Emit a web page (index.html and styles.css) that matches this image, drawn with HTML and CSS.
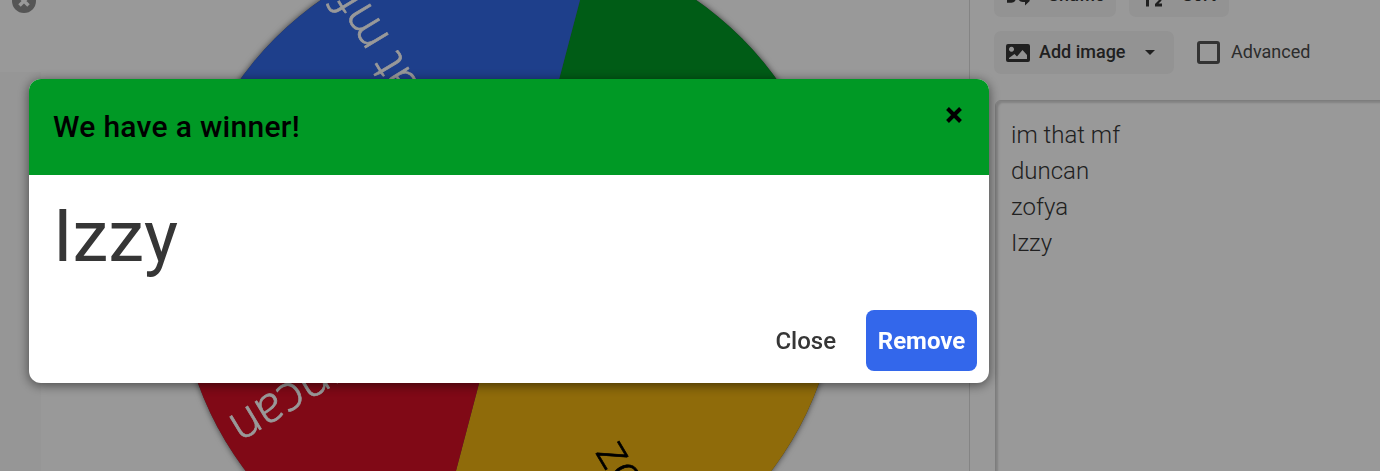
FILE: index.html
```html
<!DOCTYPE html>
<html lang="en">

<head>
    <meta name="viewport" content="width=device-width, initial-scale=1.0" />
    <title>Wheel</title>
    <link rel="stylesheet" href="styles.css">
</head>

<body>
    <div class="page">
        <div class="stage">
            <div class="stage-side"></div>
            <svg class="wheel" width="969" height="471" viewBox="0 0 969 471">
                <defs>
                    <clipPath id="rim">
                        <circle cx="508.5" cy="271.5" r="330" />
                    </clipPath>
                </defs>
                <circle class="wheel-shadow" cx="508.5" cy="271.5" r="330" />
                <g clip-path="url(#rim)">
                    <polygon class="slice-green" points="508.5,271.5 594.5,-55 900,-100 900,374.6" />
                    <polygon class="slice-yellow" points="508.5,271.5 900,374.600 600,800 422,600" />
                    <polygon class="slice-red" points="508.5,271.5 422,600 100,800 180,185" />
                    <polygon class="slice-blue" points="508.5,271.5 180,185 100,-100 594.5,-55" />
                </g>
                <g transform="translate(508.5 271.5)">
                    <text class="label label-light" transform="rotate(239)" x="320" text-anchor="end">im that mf</text>
                    <text class="label label-light" transform="rotate(149)" x="318" text-anchor="end">duncan</text>
                    <text class="label label-dark" transform="rotate(59)" x="316" text-anchor="end">zofya</text>
                </g>
            </svg>
            <div class="stage-close">
                <svg width="12" height="12" viewBox="0 0 12 12">
                    <path d="M1.500 1.500 L10.500 10.500 M10.500 1.500 L1.500 10.500" />
                </svg>
            </div>
        </div>

        <div class="panel">
            <div class="tools">
                <div class="tool-row">
                    <button class="tool tool-shuffle">
                        <svg width="24" height="24" viewBox="0 0 24 24">
                            <path d="M1 5h4.500c1.500 0 2.700.7 3.600 1.800L15 14.500c.5.700 1 1 1.800 1H19V12l5 4.800-5 4.800V18h-2.200c-1.700 0-3-.7-4-2L6.900 8.300C6.400 7.700 6 7.500 5.500 7.500H1zM19 2l5 4.800-5 4.800V8h-2.200c-.7 0-1.200.3-1.600.9l-1.400 1.800-1.600-2 1-1.300c1-1.300 2.300-2 3.800-2H19zM1 16h4.500c.6 0 1-.2 1.500-.8l1.200-1.600 1.600 2L9 17c-.9 1.100-2.100 1.700-3.500 1.700H1z" />
                        </svg>
                        <span>Shuffle</span>
                    </button>
                    <button class="tool tool-sort">
                        <svg width="24" height="24" viewBox="0 0 24 24">
                            <path transform="translate(0 2.500)" d="M5 2h3v18H5zM14 12c0-2 1.500-3.300 3.500-3.300S21 10 21 12c0 1.500-.8 2.500-2.200 3.800L17.500 17H21v3h-7v-2.500l3-3c.8-.8 1.200-1.400 1.200-2.300 0-.6-.3-1-.8-1s-.8.400-.8 1z" />
                        </svg>
                        <span>Sort</span>
                    </button>
                </div>
                <div class="tool-row">
                    <button class="tool tool-image">
                        <svg width="24" height="18" viewBox="0 0 24 18">
                            <path fill-rule="evenodd" d="M2 0h20a2 2 0 0 1 2 2v14a2 2 0 0 1-2 2H2a2 2 0 0 1-2-2V2a2 2 0 0 1 2-2zM5.500 2.700a2.500 2.500 0 1 0 .01 0zM3 15h18v-4l-4.500-5-5.500 6.500-2.500-2.500L3 14z" />
                        </svg>
                        <span>Add image</span>
                        <span class="caret"></span>
                    </button>
                    <label class="advanced">
                        <span class="check"></span>
                        <span>Advanced</span>
                    </label>
                </div>
            </div>
            <div class="entries">
                <div>im that mf</div>
                <div>duncan</div>
                <div>zofya</div>
                <div>Izzy</div>
            </div>
        </div>
    </div>

    <div class="overlay"></div>

    <div class="dialog">
        <div class="dialog-head">
            <p>We have a winner!</p>
            <span class="dialog-x">
                <svg width="18" height="18" viewBox="0 0 18 18">
                    <path d="M2.500 2.500 15.500 15.500 M15.500 2.500 2.500 15.500" />
                </svg>
            </span>
        </div>
        <div class="dialog-body">Izzy</div>
        <div class="dialog-foot">
            <button class="btn-close">Close</button>
            <button class="btn-remove">Remove</button>
        </div>
    </div>
</body>

</html>
```

FILE: styles.css
```css
* {
    padding: 0;
    margin: 0;
    box-sizing: border-box;
    font-family: "Roboto", sans-serif;
}

html,
body {
    height: 100%;
    overflow: hidden;
    background-color: #fff;
}

.page {
    display: flex;
    height: 471px;
    overflow: hidden;
}

.stage {
    position: relative;
    width: 969px;
    flex-shrink: 0;
    overflow: hidden;
}

.stage-side {
    position: absolute;
    left: 0;
    top: 72px;
    bottom: 0;
    width: 41px;
    background-color: #fafafa;
}

.wheel {
    position: absolute;
    left: 0;
    top: 0;
}

.wheel-shadow {
    fill: #555;
    filter: drop-shadow(0 0 3px rgba(0, 0, 0, 0.6));
}

.slice-green {
    fill: #009925;
}

.slice-yellow {
    fill: #eeb211;
}

.slice-red {
    fill: #d50f25;
}

.slice-blue {
    fill: #3369e8;
}

.label {
    font-family: "Open Sans", sans-serif;
    font-size: 50px;
    font-weight: 300;
    stroke-width: 0.7px;
    dominant-baseline: central;
}

.label-light {
    fill: #fff;
    stroke: #fff;
}

.label-dark {
    fill: #000;
    stroke: #000;
}

.stage-close {
    position: absolute;
    left: 12px;
    top: -11px;
    width: 24px;
    height: 24px;
    border-radius: 50%;
    background-color: #8e8e8e;
    display: flex;
    align-items: center;
    justify-content: center;
}

.stage-close path {
    stroke: #fff;
    stroke-width: 3.500;
    fill: none;
}

.panel {
    flex: 1;
    border-left: 1px solid #ddd;
    padding: 0 0 0 24px;
    display: flex;
    flex-direction: column;
    gap: 26px;
}

.tools {
    display: flex;
    flex-direction: column;
    gap: 14px;
    margin-top: -26px;
}

.tool-row {
    display: flex;
    align-items: center;
    gap: 13px;
}

.tool {
    height: 43px;
    border: none;
    border-radius: 7px;
    background-color: #f5f5f5;
    color: #363636;
    font-size: 18px;
    font-weight: 500;
    display: flex;
    align-items: center;
    gap: 9px;
    padding: 0 12px;
}

.tool span:not(.caret) {
    padding-bottom: 2px;
}

.tool svg {
    fill: #363636;
    flex-shrink: 0;
}

.tool-shuffle {
    width: 122px;
    gap: 18px;
}

.tool-sort {
    width: 100px;
    gap: 17px;
}

.tool-image {
    width: 180px;
}

.caret {
    width: 0;
    height: 0;
    margin-left: 10px;
    border-left: 5px solid transparent;
    border-right: 5px solid transparent;
    border-top: 5px solid #363636;
}

.advanced {
    display: flex;
    align-items: center;
    gap: 11px;
    margin-left: 10px;
    color: #4a4a4a;
    font-size: 18px;
}

.advanced span:last-child {
    padding-bottom: 2px;
}

.check {
    width: 23px;
    height: 23px;
    border: 3px solid #555;
    border-radius: 3px;
}

.entries {
    flex: 1;
    margin: 0 -10px -10px 1px;
    border: 1px solid #d0d0d0;
    border-radius: 6px 0 0 0;
    box-shadow: inset 2px 2px 2px rgba(0, 0, 0, 0.15);
    padding: 16px 15px;
    font-family: "Open Sans", sans-serif;
    font-size: 24px;
    font-weight: 300;
    line-height: 36px;
    color: #363636;
}

.overlay {
    position: fixed;
    left: 0;
    top: 0;
    right: 0;
    bottom: 0;
    background-color: rgba(0, 0, 0, 0.4);
}

.dialog {
    position: fixed;
    left: 29px;
    top: 79px;
    width: 960px;
    height: 304px;
    border-radius: 12px;
    overflow: hidden;
    background-color: #fff;
    box-shadow: 0 2px 12px rgba(0, 0, 0, 0.55);
    display: flex;
    flex-direction: column;
}

.dialog-head {
    height: 96px;
    flex-shrink: 0;
    background-color: #009925;
    padding: 0 24px;
    display: flex;
    align-items: center;
    justify-content: space-between;
    font-size: 30px;
    font-weight: 500;
    letter-spacing: 0.3px;
    color: #000;
}

.dialog-head p {
    padding-bottom: 2px;
}

.dialog-x {
    display: flex;
    margin-right: 2px;
    margin-top: -24px;
}

.dialog-x path {
    stroke: #000;
    stroke-width: 4;
    fill: none;
}

.dialog-body {
    flex: 1;
    padding: 20px 24px 0;
    font-size: 72px;
    line-height: 84px;
    color: #363636;
}

.dialog-foot {
    display: flex;
    justify-content: flex-end;
    align-items: center;
    gap: 18px;
    padding: 0 12px 12px;
}

.dialog-foot button {
    height: 61px;
    border: none;
    border-radius: 8px;
    font-size: 24px;
}

.btn-close {
    background: none;
    color: #363636;
    font-weight: 500;
    padding: 0 12px;
}

.btn-remove {
    width: 111px;
    background-color: #3367eb;
    color: #fff;
    font-weight: 700;
}
```
